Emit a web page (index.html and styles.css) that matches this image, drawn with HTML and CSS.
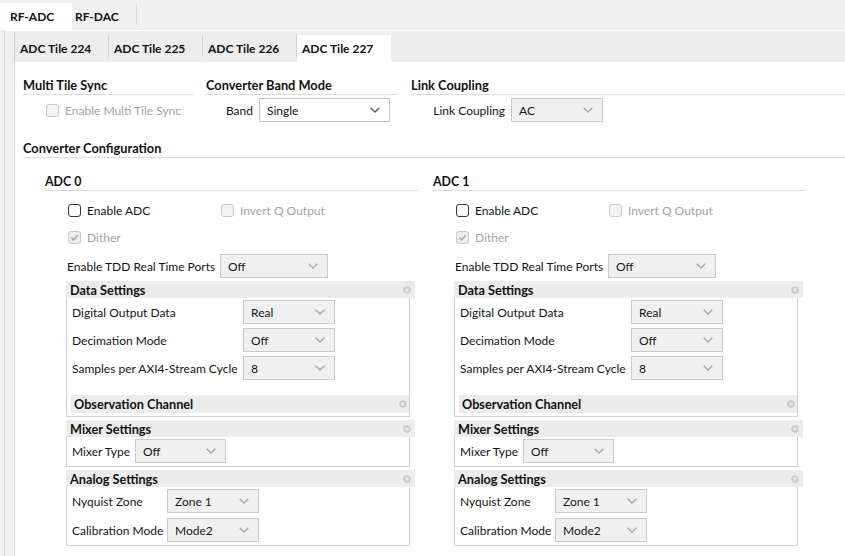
FILE: index.html
```html
<!DOCTYPE html>
<html>
<head>
<meta charset="utf-8">
<title>RF Data Converter</title>
<link rel="stylesheet" href="styles.css">
</head>
<body>
<div class="top-tabs">
  <div class="top-tab active">RF-ADC</div>
  <div class="top-tab dac">RF-DAC</div>
  <span class="top-sep"></span>
</div>
<div class="outer">
  <div class="inner">
    <div class="tile-tabs">
      <div class="tile-tab">ADC Tile 224</div>
      <div class="tile-tab">ADC Tile 225</div>
      <div class="tile-tab">ADC Tile 226</div>
      <div class="tile-tab active">ADC Tile 227</div>
    </div>
    <div class="content">
      <div class="top-groups">
        <div class="group g1">
          <div class="title">Multi Tile Sync</div>
          <div class="ctl-row">
            <span class="check disabled cb-mts"><span class="box"></span>Enable Multi Tile Sync</span>
          </div>
        </div>
        <div class="group g2">
          <div class="title">Converter Band Mode</div>
          <div class="ctl-row">
            <span class="rlabel w-band">Band</span>
            <span class="select enabled w-band-sel">Single<svg class="chev" width="10" height="6" viewBox="0 0 10 6"><polyline points="0.7,0.7 5,5 9.3,0.7" fill="none" stroke="#555" stroke-width="1.4"/></svg></span>
          </div>
        </div>
        <div class="group g3">
          <div class="title">Link Coupling</div>
          <div class="ctl-row">
            <span class="rlabel w-link">Link Coupling</span>
            <span class="select w92">AC<svg class="chev" width="10" height="6" viewBox="0 0 10 6"><polyline points="0.7,0.7 5,5 9.3,0.7" fill="none" stroke="#a8a8a8" stroke-width="1.3"/></svg></span>
          </div>
        </div>
      </div>

      <div class="title conv-title">Converter Configuration</div>

      <div class="adc-cols">
        <div class="adc-col">
          <div class="title adc-title">ADC 0</div>
          <div class="check-row first">
            <span class="check cb-en"><span class="box"></span>Enable ADC</span>
            <span class="check disabled"><span class="box"></span>Invert Q Output</span>
          </div>
          <div class="check-row second">
            <span class="check disabled checked"><span class="box"><svg width="11" height="11" viewBox="0 0 11 11"><polyline points="2.2,5.6 4.5,7.9 8.8,3.2" fill="none" stroke="#a9a9a9" stroke-width="1.5"/></svg></span>Dither</span>
          </div>
          <div class="tdd-row">
            <span class="tdd-label">Enable TDD Real Time Ports</span>
            <span class="select w108">Off<svg class="chev" width="10" height="6" viewBox="0 0 10 6"><polyline points="0.7,0.7 5,5 9.3,0.7" fill="none" stroke="#a8a8a8" stroke-width="1.3"/></svg></span>
          </div>

          <div class="panel">
            <div class="panel-head first-head">Data Settings<svg class="pin" width="8" height="8" viewBox="0 0 8 8"><circle cx="4" cy="4" r="3.3" fill="#d4d4d4" stroke="#bdbdbd" stroke-width="0.8"/><path d="M2.6 2.6 L5.4 5.4 M5.4 2.6 L2.6 5.4" stroke="#f4f4f4" stroke-width="0.8"/></svg></div>
            <div class="panel-body">
              <div class="form-grid data-grid">
                <span>Digital Output Data</span>
                <span class="select w92">Real<svg class="chev" width="10" height="6" viewBox="0 0 10 6"><polyline points="0.7,0.7 5,5 9.3,0.7" fill="none" stroke="#a8a8a8" stroke-width="1.3"/></svg></span>
                <span>Decimation Mode</span>
                <span class="select w92">Off<svg class="chev" width="10" height="6" viewBox="0 0 10 6"><polyline points="0.7,0.7 5,5 9.3,0.7" fill="none" stroke="#a8a8a8" stroke-width="1.3"/></svg></span>
                <span>Samples per AXI4-Stream Cycle</span>
                <span class="select w92">8<svg class="chev" width="10" height="6" viewBox="0 0 10 6"><polyline points="0.7,0.7 5,5 9.3,0.7" fill="none" stroke="#a8a8a8" stroke-width="1.3"/></svg></span>
              </div>
              <div class="sub-head">Observation Channel<svg class="pin" width="8" height="8" viewBox="0 0 8 8"><circle cx="4" cy="4" r="3.3" fill="#d4d4d4" stroke="#bdbdbd" stroke-width="0.8"/><path d="M2.6 2.6 L5.4 5.4 M5.4 2.6 L2.6 5.4" stroke="#f4f4f4" stroke-width="0.8"/></svg></div>
            </div>
          </div>

          <div class="panel">
            <div class="panel-head">Mixer Settings<svg class="pin" width="8" height="8" viewBox="0 0 8 8"><circle cx="4" cy="4" r="3.3" fill="#d4d4d4" stroke="#bdbdbd" stroke-width="0.8"/><path d="M2.6 2.6 L5.4 5.4 M5.4 2.6 L2.6 5.4" stroke="#f4f4f4" stroke-width="0.8"/></svg></div>
            <div class="panel-body">
              <div class="form-grid mixer-grid">
                <span>Mixer Type</span>
                <span class="select w91">Off<svg class="chev" width="10" height="6" viewBox="0 0 10 6"><polyline points="0.7,0.7 5,5 9.3,0.7" fill="none" stroke="#a8a8a8" stroke-width="1.3"/></svg></span>
              </div>
            </div>
          </div>

          <div class="panel">
            <div class="panel-head analog-head">Analog Settings<svg class="pin" width="8" height="8" viewBox="0 0 8 8"><circle cx="4" cy="4" r="3.3" fill="#d4d4d4" stroke="#bdbdbd" stroke-width="0.8"/><path d="M2.6 2.6 L5.4 5.4 M5.4 2.6 L2.6 5.4" stroke="#f4f4f4" stroke-width="0.8"/></svg></div>
            <div class="panel-body">
              <div class="form-grid analog-grid">
                <span>Nyquist Zone</span>
                <span class="select w92">Zone 1<svg class="chev" width="10" height="6" viewBox="0 0 10 6"><polyline points="0.7,0.7 5,5 9.3,0.7" fill="none" stroke="#a8a8a8" stroke-width="1.3"/></svg></span>
                <span>Calibration Mode</span>
                <span class="select w92">Mode2<svg class="chev" width="10" height="6" viewBox="0 0 10 6"><polyline points="0.7,0.7 5,5 9.3,0.7" fill="none" stroke="#a8a8a8" stroke-width="1.3"/></svg></span>
              </div>
            </div>
          </div>
        </div>

        <div class="adc-col">
          <div class="title adc-title">ADC 1</div>
          <div class="check-row first">
            <span class="check cb-en"><span class="box"></span>Enable ADC</span>
            <span class="check disabled"><span class="box"></span>Invert Q Output</span>
          </div>
          <div class="check-row second">
            <span class="check disabled checked"><span class="box"><svg width="11" height="11" viewBox="0 0 11 11"><polyline points="2.2,5.6 4.5,7.9 8.8,3.2" fill="none" stroke="#a9a9a9" stroke-width="1.5"/></svg></span>Dither</span>
          </div>
          <div class="tdd-row">
            <span class="tdd-label">Enable TDD Real Time Ports</span>
            <span class="select w108">Off<svg class="chev" width="10" height="6" viewBox="0 0 10 6"><polyline points="0.7,0.7 5,5 9.3,0.7" fill="none" stroke="#a8a8a8" stroke-width="1.3"/></svg></span>
          </div>

          <div class="panel">
            <div class="panel-head first-head">Data Settings<svg class="pin" width="8" height="8" viewBox="0 0 8 8"><circle cx="4" cy="4" r="3.3" fill="#d4d4d4" stroke="#bdbdbd" stroke-width="0.8"/><path d="M2.6 2.6 L5.4 5.4 M5.4 2.6 L2.6 5.4" stroke="#f4f4f4" stroke-width="0.8"/></svg></div>
            <div class="panel-body">
              <div class="form-grid data-grid">
                <span>Digital Output Data</span>
                <span class="select w92">Real<svg class="chev" width="10" height="6" viewBox="0 0 10 6"><polyline points="0.7,0.7 5,5 9.3,0.7" fill="none" stroke="#a8a8a8" stroke-width="1.3"/></svg></span>
                <span>Decimation Mode</span>
                <span class="select w92">Off<svg class="chev" width="10" height="6" viewBox="0 0 10 6"><polyline points="0.7,0.7 5,5 9.3,0.7" fill="none" stroke="#a8a8a8" stroke-width="1.3"/></svg></span>
                <span>Samples per AXI4-Stream Cycle</span>
                <span class="select w92">8<svg class="chev" width="10" height="6" viewBox="0 0 10 6"><polyline points="0.7,0.7 5,5 9.3,0.7" fill="none" stroke="#a8a8a8" stroke-width="1.3"/></svg></span>
              </div>
              <div class="sub-head">Observation Channel<svg class="pin" width="8" height="8" viewBox="0 0 8 8"><circle cx="4" cy="4" r="3.3" fill="#d4d4d4" stroke="#bdbdbd" stroke-width="0.8"/><path d="M2.6 2.6 L5.4 5.4 M5.4 2.6 L2.6 5.4" stroke="#f4f4f4" stroke-width="0.8"/></svg></div>
            </div>
          </div>

          <div class="panel">
            <div class="panel-head">Mixer Settings<svg class="pin" width="8" height="8" viewBox="0 0 8 8"><circle cx="4" cy="4" r="3.3" fill="#d4d4d4" stroke="#bdbdbd" stroke-width="0.8"/><path d="M2.6 2.6 L5.4 5.4 M5.4 2.6 L2.6 5.4" stroke="#f4f4f4" stroke-width="0.8"/></svg></div>
            <div class="panel-body">
              <div class="form-grid mixer-grid">
                <span>Mixer Type</span>
                <span class="select w91">Off<svg class="chev" width="10" height="6" viewBox="0 0 10 6"><polyline points="0.7,0.7 5,5 9.3,0.7" fill="none" stroke="#a8a8a8" stroke-width="1.3"/></svg></span>
              </div>
            </div>
          </div>

          <div class="panel">
            <div class="panel-head analog-head">Analog Settings<svg class="pin" width="8" height="8" viewBox="0 0 8 8"><circle cx="4" cy="4" r="3.3" fill="#d4d4d4" stroke="#bdbdbd" stroke-width="0.8"/><path d="M2.6 2.6 L5.4 5.4 M5.4 2.6 L2.6 5.4" stroke="#f4f4f4" stroke-width="0.8"/></svg></div>
            <div class="panel-body">
              <div class="form-grid analog-grid">
                <span>Nyquist Zone</span>
                <span class="select w92">Zone 1<svg class="chev" width="10" height="6" viewBox="0 0 10 6"><polyline points="0.7,0.7 5,5 9.3,0.7" fill="none" stroke="#a8a8a8" stroke-width="1.3"/></svg></span>
                <span>Calibration Mode</span>
                <span class="select w92">Mode2<svg class="chev" width="10" height="6" viewBox="0 0 10 6"><polyline points="0.7,0.7 5,5 9.3,0.7" fill="none" stroke="#a8a8a8" stroke-width="1.3"/></svg></span>
              </div>
            </div>
          </div>
        </div>
      </div>
    </div>
  </div>
</div>
</body>
</html>
```

FILE: styles.css
```css
* { box-sizing: border-box; }
html, body { margin: 0; padding: 0; }
body {
  width: 845px;
  height: 556px;
  overflow: hidden;
  background: #f0f0f0;
  font-family: Lato, "Liberation Sans", sans-serif;
  font-size: 12px;
  color: #141414;
}

/* top tabs */
.top-tabs { display: flex; align-items: flex-end; height: 30px; }
.top-tab { height: 27px; display: flex; align-items: center; font-weight: bold; color: #111; }
.top-tab.active { background: #fff; width: 72px; padding-left: 10px; }
.top-tab.dac { width: 64px; padding-left: 3px; }
.top-sep { align-self: flex-start; margin-top: 3px; width: 1px; height: 22px; background: #d8d8d8; }

.outer {
  border-top: 1px solid #fff;
  margin-left: 4px;
  border-left: 1px solid #d6d6d6;
  padding: 1px 0 0 9px;
  height: 526px;
}
.inner {
  border-left: 1px solid #cfcfcf;
  height: 525px;
  display: flex;
  flex-direction: column;
}
.tile-tabs { display: flex; align-items: flex-end; height: 30px; background: #ededed; }
.tile-tab {
  width: 94px; height: 27px; padding-left: 5px;
  display: flex; align-items: center;
  font-weight: bold; color: #111;
}
.tile-tab::after {
  content: ""; margin-left: auto; align-self: flex-start;
  width: 1px; height: 22px; background: #d2d2d2;
}
.tile-tab.active { background: #fff; }
.tile-tab.active::after { display: none; }

.content { flex: 1; background: #fff; padding-left: 8px; }

/* titles */
.title {
  font-weight: bold; color: #111; font-size: 12.8px;
  line-height: 17px; height: 18px;
  border-bottom: 1px solid #dcdcdc;
}
.title.adc-title { font-size: 12.4px; }

.top-groups { display: flex; gap: 13px; padding-top: 15px; }
.group.g1 { width: 170px; }
.group.g2 { width: 192px; }
.group.g3 { flex: 1; }
.ctl-row { display: flex; align-items: center; height: 24px; margin-top: 3px; }
.rlabel { text-align: right; padding-right: 6px; }
.w-band { width: 53px; }
.w-link { width: 100px; }
.cb-mts { margin-left: 23px; }

.conv-title { margin-top: 18px; }

/* checkboxes */
.check { display: inline-flex; align-items: center; gap: 6px; height: 14px; }
.check .box {
  width: 13px; height: 13px; border: 1px solid #3a3a3a; border-radius: 3px;
  background: #fff; display: inline-flex; align-items: center; justify-content: center;
}
.check.disabled { color: #a3a3a3; }
.check.disabled .box { border-color: #c9c9c9; background: #f3f3f3; }
.check.checked .box { background: #ededed; }

/* selects */
.select {
  display: inline-flex; align-items: center;
  height: 24px; padding-left: 7px;
  border: 1px solid #cacaca; background: #f0f0f0; color: #141414;
}
.select .chev { margin-left: auto; margin-right: 9px; }
.select.enabled { background: #fff; border-color: #c4c4c4; }
.w-band-sel { width: 131px; }
.w92 { width: 92px; }
.w91 { width: 91px; }
.w108 { width: 108px; }

/* ADC columns */
.adc-cols { display: flex; gap: 15px; padding-left: 22px; }
.adc-col { width: 373px; }
.adc-title { margin-top: 15px; }
.check-row { display: flex; padding-left: 23px; }
.check-row.first { margin-top: 12px; }
.check-row.second { margin-top: 13px; }
.cb-en { width: 153px; }
.tdd-row { display: flex; align-items: center; margin-top: 10px; padding-left: 22px; }
.tdd-label { width: 153px; white-space: nowrap; }

/* panels */
.panel { margin-left: 21px; width: 349px; margin-top: 3px; }
.panel-head {
  height: 17px; background: #ececec;
  display: flex; align-items: center; padding-left: 4px;
  font-weight: bold; color: #111; font-size: 12.7px;
}
.panel-head.first-head { margin-top: 2px; }
.panel-head .pin { margin-left: auto; margin-right: 4px; }
.panel-body {
  width: 344px;
  border: 1px solid #c9d0da; border-top: none;
  padding: 2px 0 3px 5px;
}
.form-grid { display: grid; row-gap: 4px; align-items: center; }
.data-grid { grid-template-columns: 171px 92px; }
.mixer-grid { grid-template-columns: 63px 91px; }
.analog-grid { grid-template-columns: 95px 92px; row-gap: 5px; }
.sub-head {
  margin-top: 15px; margin-left: -1px;
  height: 18px; background: #ececec;
  display: flex; align-items: center; padding-left: 3px;
  font-weight: bold; color: #111; font-size: 12.7px;
}
.sub-head .pin { margin-left: auto; margin-right: 2px; }
```
